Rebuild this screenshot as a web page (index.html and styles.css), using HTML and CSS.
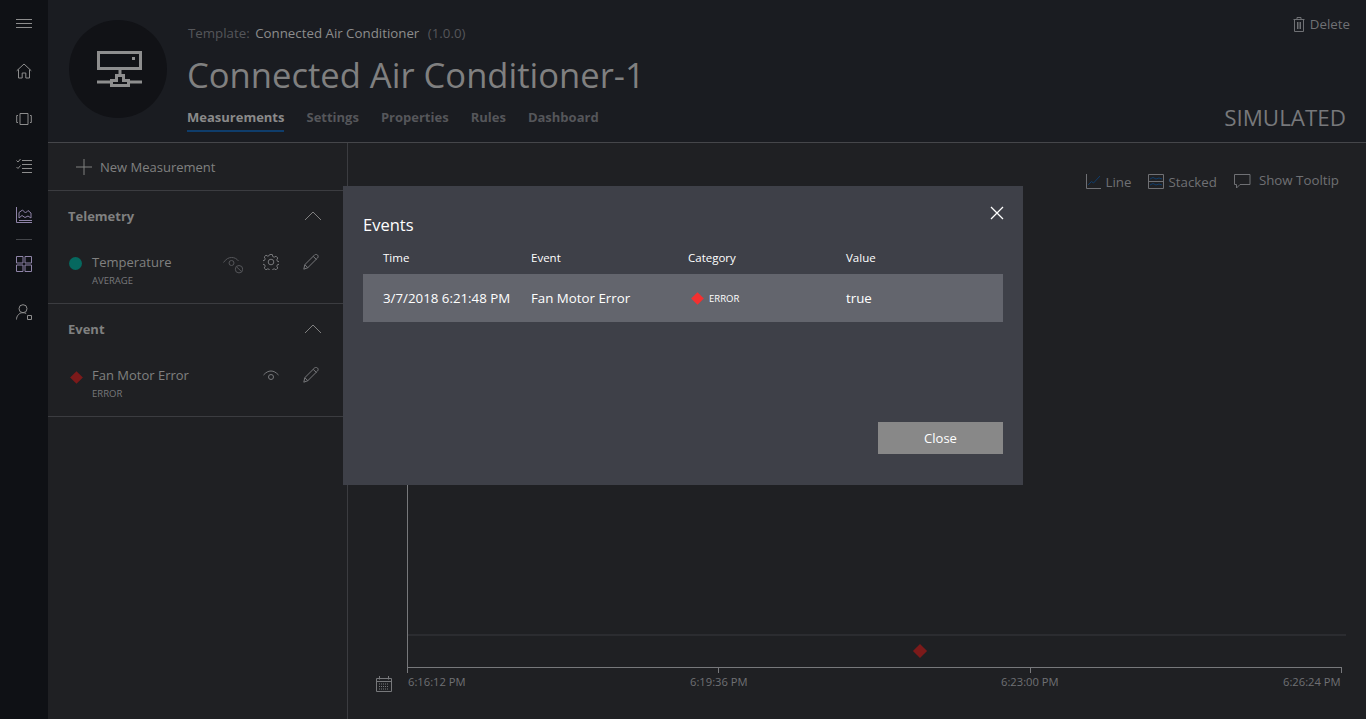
FILE: index.html
```html
<!DOCTYPE html>
<html lang="en">
<head>
    <meta charset="UTF-8">
    <meta name="viewport" content="width=device-width, initial-scale=1.0">
    <title>Connected Air Conditioner-1</title>
    <link rel="stylesheet" href="styles.css">
</head>
<body>
    <div class="app">
        <!-- Left navigation -->
        <nav class="nav">
            <svg class="nav-icon nav-menu" width="16" height="16" viewBox="0 0 16 16"><path d="M0 3.500h16M0 7.500h16M0 11.500h16"/></svg>
            <svg class="nav-icon nav-home" width="16" height="16" viewBox="0 0 16 16"><path d="M.7 7.800 8 1l7.300 6.800M2.500 6.500v8.500h3.700v-5h3.600v5h3.700V6.500"/></svg>
            <svg class="nav-icon nav-device" width="16" height="16" viewBox="0 0 16 16"><path d="M4 2.500h8v11H4zM2 4.500H.7v7H2M14 4.500h1.300v7H14"/></svg>
            <svg class="nav-icon nav-rules" width="16" height="16" viewBox="0 0 16 16"><path d="M6 2.500h10M6 6.500h10M6 10.500h10M6 14.500h10M.5 2.500l1.500 1.500L4.500 1M.5 9l1.500 1.500L4.500 7.500"/></svg>
            <svg class="nav-icon nav-analytics" width="16" height="16" viewBox="0 0 16 16"><path class="accent" d="M.5 0v15.500H16M3 13.500h13M3 11V5.500L6.500 3l3 3 2.500-2.500 3 2.500v5l-3-2-3 1.500-3-2z"/></svg>
            <div class="nav-sep"></div>
            <svg class="nav-icon nav-dash" width="16" height="16" viewBox="0 0 16 16"><path class="accent" d="M.5.500h6.500v6.500H.5zM9 .500h6.500v6.500H9zM.5 9h6.500v6.500H.5zM9 9h6.500v6.500H9z"/></svg>
            <svg class="nav-icon nav-admin" width="16" height="16" viewBox="0 0 16 16"><path d="M7 .7a4 4 0 1 1 0 8 4 4 0 0 1 0-8zM.5 15.500c0-3.500 2.500-6.800 6.500-6.800 1.300 0 2.300.3 3.200.8M11.500 11.500h4v4h-4z"/></svg>
        </nav>

        <div class="content">
            <!-- Device header -->
            <header class="device">
                <div class="avatar">
                    <svg width="45" height="36" viewBox="0 0 45 36"><path d="M1.500 1.500h42v16h-42zM23 18v7M0 31h14M31 31h14M14.500 34.500v-5h5v-5h7v5h5v5z"/><path class="dot" d="M35 6h3v3h-3z"/></svg>
                </div>
                <div class="device-info">
                    <div class="template">
                        <span class="template-label">Template:</span>
                        <span class="template-name">Connected Air Conditioner</span>
                        <span class="template-version">(1.0.0)</span>
                    </div>
                    <h1 class="device-name">Connected Air Conditioner-1</h1>
                    <div class="tabs">
                        <a class="tab active">Measurements</a>
                        <a class="tab">Settings</a>
                        <a class="tab">Properties</a>
                        <a class="tab">Rules</a>
                        <a class="tab">Dashboard</a>
                    </div>
                </div>
                <div class="device-side">
                    <div class="delete">
                        <svg width="12" height="15" viewBox="0 0 12 15"><path d="M.5 2.500h11M4 2.500V.5h4v2M1.500 2.500v12h9v-12M4.500 5v7M7.500 5v7M6 5v7"/></svg>
                        <span>Delete</span>
                    </div>
                    <div class="simulated">SIMULATED</div>
                </div>
            </header>

            <div class="body">
                <!-- Measurement list -->
                <aside class="panel">
                    <div class="new-row">
                        <svg width="16" height="16" viewBox="0 0 16 16"><path d="M8 0v16M0 8h16"/></svg>
                        <span>New Measurement</span>
                    </div>

                    <section class="group">
                        <div class="group-head">
                            <span>Telemetry</span>
                            <svg class="chev" width="18" height="10" viewBox="0 0 18 10"><path d="M1 9l8-8 8 8"/></svg>
                        </div>
                        <div class="item">
                            <span class="mark mark-circle"></span>
                            <div class="item-text">
                                <div class="item-name">Temperature</div>
                                <div class="item-sub">AVERAGE</div>
                            </div>
                            <svg class="tool tool-dim" width="20" height="18" viewBox="0 0 20 18"><path d="M.5 6.500C3 3 5.500 1.500 8.500 1.500s5 1 7 3.500M8.500 4.500a2.500 2.500 0 1 1 0 5 2.500 2.500 0 0 1 0-5zM16 9.500a3.700 3.700 0 1 1 0 7.400 3.700 3.700 0 0 1 0-7.400zM13.500 10.800l5 4.800"/></svg>
                            <svg class="tool" width="16" height="16" viewBox="0 0 16 16"><path d="M6.700.5h2.600l.4 2 1.500.7 1.800-1 1.800 1.800-1 1.800.6 1.500 2 .4v2.600l-2 .4-.6 1.500 1 1.800-1.800 1.800-1.800-1-1.500.6-.4 2H6.700l-.4-2-1.500-.6-1.800 1-1.800-1.800 1-1.800-.6-1.500-2-.4V6.700l2-.4.6-1.500-1-1.800 1.800-1.800 1.800 1 1.500-.7z"/><circle cx="8" cy="8" r="2.800"/></svg>
                            <svg class="tool" width="16" height="16" viewBox="0 0 16 16"><path d="M.8 15.200l1-4.500L11.500 1c1-1 2.300-.8 3 0s1 2 0 3l-9.700 9.700zM1.800 10.700l3 3M10.300 2.500l3.200 3"/></svg>
                        </div>
                    </section>

                    <section class="group">
                        <div class="group-head">
                            <span>Event</span>
                            <svg class="chev" width="18" height="10" viewBox="0 0 18 10"><path d="M1 9l8-8 8 8"/></svg>
                        </div>
                        <div class="item">
                            <span class="mark mark-diamond"></span>
                            <div class="item-text">
                                <div class="item-name">Fan Motor Error</div>
                                <div class="item-sub">ERROR</div>
                            </div>
                            <svg class="tool tool-eye" width="16" height="11" viewBox="0 0 16 11"><path d="M.5 5C3 2.300 5.300 1 8 1s5 1.300 7.500 4M8 4.500a2.500 2.500 0 1 1 0 5 2.500 2.500 0 0 1 0-5z"/></svg>
                            <svg class="tool" width="16" height="16" viewBox="0 0 16 16"><path d="M.8 15.200l1-4.500L11.500 1c1-1 2.300-.8 3 0s1 2 0 3l-9.700 9.700zM1.800 10.700l3 3M10.300 2.500l3.200 3"/></svg>
                        </div>
                    </section>
                </aside>

                <!-- Chart -->
                <main class="chart">
                    <div class="chart-tools">
                        <div class="chart-tool">
                            <svg width="15" height="15" viewBox="0 0 15 15"><path d="M.5 0v14.500H15"/><path class="blue" d="M2 11l3.500-3.500 2 1.500L14 2"/></svg>
                            <span>Line</span>
                        </div>
                        <div class="chart-tool chart-tool-stacked">
                            <svg width="16" height="15" viewBox="0 0 16 15"><path d="M.5.500h15v14h-15zM.5 7.500h15"/><path class="blue" d="M2 5l3-1.500 3 1.500 3-1 3 1M2 11l3-1.500 3 1.500 3-1 3 1"/></svg>
                            <span>Stacked</span>
                        </div>
                        <div class="chart-tool chart-tool-tip">
                            <svg width="17" height="15" viewBox="0 0 17 15"><path d="M.5.500h15.500v10H6l-3.500 3.500v-3.500h-2z"/></svg>
                            <span>Show Tooltip</span>
                        </div>
                    </div>

                    <div class="plot">
                        <div class="plot-area">
                            <div class="band"></div>
                            <span class="point"></span>
                        </div>
                        <div class="ticks">
                            <span class="tick"></span>
                            <span class="tick"></span>
                            <span class="tick"></span>
                            <span class="tick"></span>
                        </div>
                        <div class="axis-row">
                            <svg class="calendar" width="16" height="16" viewBox="0 0 16 16"><path d="M.5 2.500h15v13H.5zM.5 5.500h15M3.500 0v3.500M12.500 0v3.500"/><path class="cal-dots" d="M3 8h10M3 10.500h10M3 13h10"/></svg>
                            <div class="axis-labels">
                                <span>6:16:12 PM</span>
                                <span>6:19:36 PM</span>
                                <span>6:23:00 PM</span>
                                <span>6:26:24 PM</span>
                            </div>
                        </div>
                    </div>
                </main>
            </div>
        </div>
    </div>

    <!-- Events dialog -->
    <div class="modal">
        <svg class="modal-x" width="14" height="14" viewBox="0 0 14 14"><path d="M1 1l12 12M13 1L1 13"/></svg>
        <h2 class="modal-title">Events</h2>
        <table class="events">
            <thead>
                <tr>
                    <th>Time</th>
                    <th>Event</th>
                    <th>Category</th>
                    <th>Value</th>
                </tr>
            </thead>
            <tbody>
                <tr>
                    <td>3/7/2018 6:21:48 PM</td>
                    <td>Fan Motor Error</td>
                    <td><span class="red-mark"></span><span class="category">ERROR</span></td>
                    <td>true</td>
                </tr>
            </tbody>
        </table>
        <div class="modal-foot">
            <button class="close-btn">Close</button>
        </div>
    </div>
</body>
</html>
```

FILE: styles.css
```css
/* General page */
html, body {
    height: 100%;
}

body {
    font-family: 'Open Sans', 'Noto Sans', sans-serif;
    margin: 0;
    background-color: #1f2023;
    color: #8a8a8a;
    overflow: hidden;
}

svg {
    display: block;
    fill: none;
    stroke: currentColor;
    stroke-width: 1;
    flex: none;
}

.app {
    display: flex;
    height: 719px;
}

/* Left navigation */
.nav {
    width: 48px;
    flex: none;
    background-color: #0f1115;
    color: #8d8d8d;
    display: flex;
    flex-direction: column;
    align-items: center;
    padding-top: 16px;
    box-sizing: border-box;
}

.nav-home { margin-top: 31px; }
.nav-device { margin-top: 32px; }
.nav-rules { margin-top: 31px; }
.nav-analytics { margin-top: 33px; }
.nav-dash { margin-top: 16px; }
.nav-admin { margin-top: 32px; }

.nav .accent {
    stroke: #8f84a8;
}

.nav-sep {
    width: 16px;
    height: 1px;
    background-color: #44464a;
    margin-top: 16px;
}

.content {
    flex: 1;
    min-width: 0;
    display: flex;
    flex-direction: column;
}

/* Device header */
.device {
    height: 143px;
    flex: none;
    background-color: #1a1c21;
    border-bottom: 1px solid #45464a;
    display: flex;
    padding: 20px 20px 0 21px;
    box-sizing: border-box;
}

.avatar {
    width: 98px;
    height: 98px;
    border-radius: 50%;
    background-color: #111216;
    color: #8e8e8e;
    flex: none;
    display: flex;
    align-items: center;
    justify-content: center;
}

.avatar svg {
    stroke-width: 3;
    margin-left: 3px;
}

.avatar .dot {
    fill: #8e8e8e;
    stroke: none;
}

.device-info {
    margin-left: 20px;
    flex: 1;
}

.template {
    font-size: 13.300px;
    line-height: 26px;
}

.template-label,
.template-version {
    color: #55565a;
}

.template-label {
    margin-left: 1px;
}

.template-name {
    color: #8c8c8c;
    margin: 0 5px 0 2px;
}

.device-name {
    font-size: 34.6px;
    font-weight: 400;
    line-height: 46px;
    margin: 6px 0 0;
    color: #808080;
}

.tabs {
    display: flex;
    gap: 22px;
    margin-top: 9px;
    font-size: 13px;
    font-weight: 700;
    color: #55565a;
}

.tab {
    padding-bottom: 3px;
    line-height: 20px;
}

.tab.active {
    color: #8a8a8a;
    border-bottom: 2px solid #0f3d6b;
}

.device-side {
    display: flex;
    flex-direction: column;
    align-items: flex-end;
    justify-content: space-between;
    height: 118px;
    margin-top: -5px;
}

.delete {
    display: flex;
    align-items: center;
    gap: 5px;
    font-size: 13.3px;
    color: #6f7074;
    margin-right: -4px;
}

.simulated {
    font-size: 22.4px;
    color: #77787b;
    line-height: 30px;
}

/* Body: list + chart */
.body {
    flex: 1;
    display: flex;
    min-height: 0;
}

/* Measurement list */
.panel {
    width: 299px;
    flex: none;
    border-right: 1px solid #3b3c40;
    box-sizing: content-box;
}

.new-row {
    height: 47px;
    border-bottom: 1px solid #3b3c40;
    display: flex;
    align-items: center;
    padding-left: 28px;
    gap: 8px;
    font-size: 13px;
    color: #808080;
}

.group {
    height: 112px;
    border-bottom: 1px solid #3b3c40;
    padding: 0 26px 0 20px;
}

.group-head {
    display: flex;
    justify-content: space-between;
    align-items: center;
    height: 50px;
    font-size: 13px;
    font-weight: 700;
    color: #808080;
}

.chev {
    margin-right: -1px;
}

.item {
    display: flex;
    align-items: flex-start;
    padding: 13px 2px 0 0;
}

.mark {
    flex: none;
}

.mark-circle {
    width: 13px;
    height: 13px;
    border-radius: 50%;
    background-color: #06685f;
    margin: 3px 9px 0 1px;
}

.mark-diamond {
    width: 9px;
    height: 9px;
    background-color: #7c1a1a;
    transform: rotate(45deg);
    margin: 6px 11px 0 4px;
}

.item-text {
    flex: 1;
    margin-left: 1px;
}

.mark-diamond + .item-text {
    margin-left: 0;
}

.item-name {
    font-size: 13px;
    line-height: 16px;
    color: #808080;
}

.item-sub {
    font-size: 9.500px;
    line-height: 12px;
    margin-top: 5px;
    color: #77787b;
}

.tool {
    color: #77787b;
    margin-left: 24px;
}

.tool-dim {
    color: #55565a;
    margin-right: -4px;
    margin-top: 2px;
}

.tool-eye {
    margin-top: 3px;
}

/* Chart */
.chart {
    flex: 1;
    min-width: 0;
    display: flex;
    flex-direction: column;
    padding: 0 20px 0 26px;
}

.chart-tools {
    height: 46px;
    flex: none;
    display: flex;
    justify-content: flex-end;
    align-items: center;
    gap: 17px;
    padding: 30px 7px 0 0;
    box-sizing: border-box;
    font-size: 13.3px;
}

.chart-tool {
    display: flex;
    align-items: center;
    gap: 5px;
    color: #6f7074;
}

.chart-tool span {
    margin-top: 2px;
}

.chart-tool-stacked {
    gap: 4px;
}

.chart-tool-tip {
    gap: 8px;
}

.chart-tool-tip span {
    margin-top: -2px;
}

.chart-tool .blue {
    stroke: #0f3d6b;
}

.plot {
    flex: 1;
    display: flex;
    flex-direction: column;
    padding-left: 33px;
}

.plot-area {
    position: relative;
    flex: 1;
    border-left: 1px solid #77787b;
}

.band {
    position: absolute;
    left: 0;
    right: 0;
    bottom: 31px;
    height: 2px;
    background-color: #2b2c30;
}

.point {
    position: absolute;
    left: 507px;
    bottom: 11px;
    width: 10px;
    height: 10px;
    background-color: #7c1a1a;
    transform: rotate(45deg);
}

.ticks {
    display: flex;
    justify-content: space-between;
    height: 5px;
    margin-right: 4px;
    border-top: 1px solid #77787b;
}

.tick {
    width: 1px;
    background-color: #77787b;
}

.axis-row {
    position: relative;
    height: 46px;
}

.calendar {
    position: absolute;
    left: -31px;
    top: 3px;
    color: #77787b;
}

.cal-dots {
    stroke-dasharray: 1 1;
}

.axis-labels {
    display: grid;
    grid-template-columns: 282px 311px 282px 58px;
    padding-left: 1px;
    font-size: 11.200px;
    color: #6f7074;
    line-height: 16px;
    margin-top: 1px;
    white-space: nowrap;
}

/* Events dialog */
.modal {
    position: absolute;
    left: 343px;
    top: 186px;
    width: 680px;
    height: 299px;
    box-sizing: border-box;
    background-color: #3e4048;
    padding: 0 20px;
    color: #fff;
}

.modal-x {
    position: absolute;
    right: 19px;
    top: 20px;
    stroke-width: 1.300;
}

.modal-title {
    font-size: 16.500px;
    font-weight: 400;
    line-height: 24px;
    margin: 0;
    padding-top: 27px;
}

.events {
    width: 640px;
    border-collapse: collapse;
    table-layout: fixed;
    margin-top: 4px;
}

.events th {
    font-size: 11.500px;
    font-weight: 400;
    text-align: left;
    padding: 0 0 0 20px;
    height: 33px;
    line-height: 16px;
}

.events th:nth-child(1) { width: 128px; }
.events th:nth-child(2) { width: 137px; }
.events th:nth-child(3) { width: 138px; }

.events td {
    font-size: 13.300px;
    background-color: #63656d;
    height: 48px;
    padding: 0 0 0 20px;
    white-space: nowrap;
}

.red-mark {
    display: inline-block;
    width: 9px;
    height: 9px;
    background-color: #f33030;
    transform: rotate(45deg);
    margin: 0 7px 0 5px;
}

.category {
    font-size: 9.500px;
    vertical-align: 1px;
}

.modal-foot {
    display: flex;
    justify-content: flex-end;
    margin-top: 100px;
}

.close-btn {
    width: 125px;
    height: 32px;
    border: none;
    background-color: #888888;
    color: #fff;
    font-family: inherit;
    font-size: 13px;
}
```
